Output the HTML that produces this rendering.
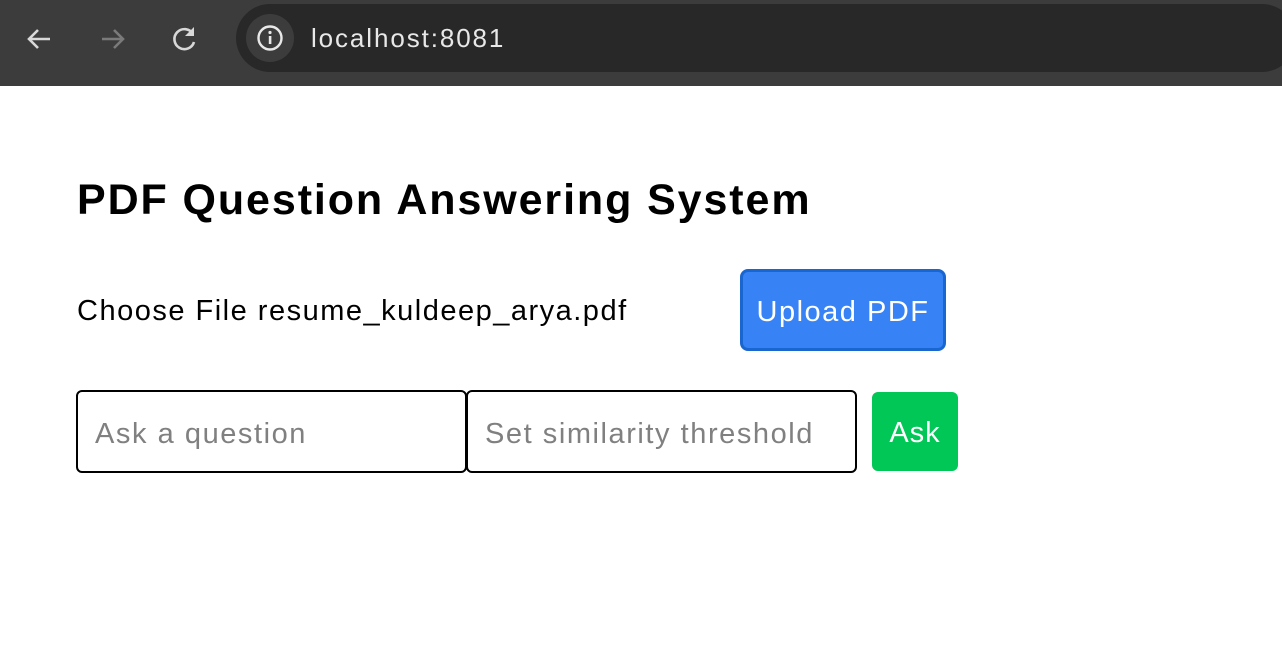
<!DOCTYPE html>
<html><head><style>
body{margin:0;width:1282px;height:654px;background:#fff;font-family:"Liberation Sans",Arial,sans-serif;position:relative;overflow:hidden}
.bar{position:absolute;left:0;top:0;width:1282px;height:86px;background:#3c3c3c}
.url{position:absolute;left:236px;top:4px;width:1060px;height:68px;background:#282828;border-radius:34px}
.info{position:absolute;left:246px;top:14px;width:48px;height:48px;border-radius:24px;background:#3c3c3c}
.ut{position:absolute;left:311px;top:23px;color:#e8e8e8;font-size:26px;letter-spacing:1.9px}
.a{position:absolute}
h1{position:absolute;left:77px;top:176px;margin:0;font-size:43px;font-weight:bold;color:#000;letter-spacing:1.9px;white-space:nowrap}
.file{position:absolute;left:77px;top:295px;font-size:29px;color:#000;letter-spacing:1.5px;white-space:nowrap}
.up{position:absolute;left:740px;top:269px;width:200px;height:76px;border:3px solid #1a66d0;background:#3783f5;border-radius:8px;color:#fff;font-size:29px;line-height:80px;text-align:center;letter-spacing:1.5px}
.in{position:absolute;top:390px;height:79px;border:2px solid #000;border-radius:6px;color:#808080;font-size:29px;line-height:85px;padding-left:17px;width:370px;letter-spacing:1.55px;white-space:nowrap}
.ask{position:absolute;left:872px;top:392px;width:86px;height:79px;background:#00c756;border-radius:6px;color:#fff;font-size:29px;line-height:82px;text-align:center;letter-spacing:1px}
</style></head><body>
<div class="bar">
<svg class="a" style="left:24px;top:24px" width="30" height="30" viewBox="0 0 30 30"><path d="M26 15H5M14 6l-9 9 9 9" stroke="#d8d8d8" stroke-width="2.6" fill="none"/></svg>
<svg class="a" style="left:98px;top:24px" width="30" height="30" viewBox="0 0 30 30"><path d="M4 15h21M16 6l9 9-9 9" stroke="#7a7a7a" stroke-width="2.6" fill="none"/></svg>
<svg class="a" style="left:170px;top:24px" width="30" height="30" viewBox="0 0 30 30"><path d="M23 10A10 10 0 1 0 24 18" stroke="#d8d8d8" stroke-width="2.6" fill="none"/><path d="M24 3v9h-9z" fill="#d8d8d8"/></svg>
<div class="url"></div>
<div class="info"></div>
<svg class="a" style="left:256px;top:24px" width="28" height="28" viewBox="0 0 28 28"><circle cx="14" cy="14" r="11.5" stroke="#e8e8e8" stroke-width="2.4" fill="none"/><rect x="12.8" y="12" width="2.6" height="8" fill="#e8e8e8"/><circle cx="14" cy="8.5" r="1.6" fill="#e8e8e8"/></svg>
<div class="ut">localhost:8081</div>
</div>
<h1>PDF Question Answering System</h1>
<div class="file">Choose File resume_kuldeep_arya.pdf</div>
<div class="up">Upload PDF</div>
<div class="in" style="left:76px">Ask a question</div>
<div class="in" style="left:466px">Set similarity threshold</div>
<div class="ask">Ask</div>
</body></html>
